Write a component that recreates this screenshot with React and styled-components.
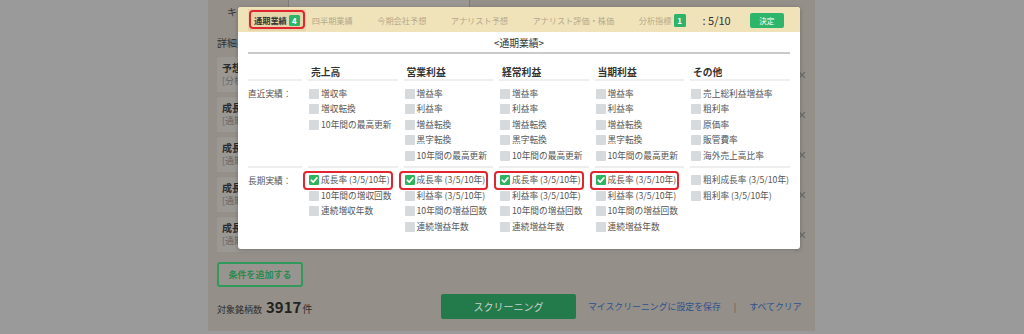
import React from 'react';
import styled, { createGlobalStyle } from 'styled-components';

const GlobalStyle = createGlobalStyle`
  html, body { margin: 0; padding: 0; }
  body {
    font-family: "Noto Sans CJK JP", "Noto Sans", sans-serif;
    background: #9a9a9a;
  }
`;

const Page = styled.div`
  position: relative;
  width: 1024px;
  height: 334px;
  overflow: hidden;
  background: #9a9a9a;
`;

const Main = styled.main`
  margin-left: 208px;
  width: 607px;
  height: 331px;
  box-sizing: border-box;
  padding: 0 6px 0 9px;
  background: #948f88;
  display: flex;
  flex-direction: column;
`;

const KeywordRow = styled.div`
  display: flex;
  align-items: center;
  height: 22px;
  padding-left: 10px;
`;

const KeywordLabel = styled.span`
  width: 61px;
  font-size: 10px;
  color: #333;
`;

const KeywordInput = styled.div`
  width: 182px;
  height: 30px;
  box-sizing: border-box;
  border: 1px solid #7f7b75;
  border-radius: 4px;
  background: #9b9893;
`;

const SectionTitle = styled.div`
  margin-top: 14px;
  font-size: 10px;
  line-height: 14px;
  color: #2e2e2e;
`;

const CardList = styled.div`
  margin-top: 7px;
  display: flex;
  flex-direction: column;
  gap: 5px;
`;

const CardRow = styled.div`
  display: flex;
  align-items: center;
`;

const Card = styled.div`
  flex: 1;
  height: 35px;
  box-sizing: border-box;
  padding: 4px 5px;
  background: #9b9893;
  border-radius: 2px;
`;

const CardTitle = styled.div`
  font-size: 10px;
  line-height: 13px;
  font-weight: 700;
  color: #2b2b2b;
`;

const CardSub = styled.div`
  font-size: 9px;
  line-height: 13px;
  color: #666;
`;

const CloseButton = styled.span`
  width: 14px;
  display: flex;
  justify-content: center;
`;

const AddButton = styled.button`
  margin-top: 10px;
  width: 86px;
  height: 25px;
  box-sizing: border-box;
  border: 2px solid #2f9a5c;
  border-radius: 3px;
  background: #989590;
  color: #2a8a50;
  font-family: inherit;
  font-size: 9px;
  font-weight: 700;
  padding: 0;
`;

const BottomRow = styled.div`
  margin-top: 7px;
  display: flex;
  align-items: center;
  height: 25px;
`;

const Count = styled.div`
  width: 224px;
  display: flex;
  align-items: baseline;
  color: #2e2e2e;
  font-size: 9px;
`;

const CountNum = styled.span`
  font-size: 15px;
  font-weight: 700;
  margin: 0 1px 0 4px;
  color: #222;
`;

const CountUnit = styled.span`
  font-size: 10px;
`;

const ScreenButton = styled.button`
  width: 135px;
  height: 25px;
  border: none;
  border-radius: 2px;
  background: #237a4b;
  color: #c9d3cc;
  font-family: inherit;
  font-size: 10px;
  padding: 0;
`;

const Links = styled.div`
  margin-left: 12px;
  display: flex;
  align-items: center;
  font-size: 8.9px;
  color: #2d5190;
  white-space: nowrap;
`;

const Sep = styled.span`
  margin: 0 13px;
  color: #555;
`;

/* Modal */
const Modal = styled.div`
  position: absolute;
  left: 238px;
  top: 7px;
  width: 562px;
  height: 242px;
  background: #fff;
  border-radius: 3px;
  overflow: hidden;
  box-shadow: 0 1px 4px rgba(0, 0, 0, 0.25);
`;

const ModalHeader = styled.div`
  height: 25px;
  box-sizing: border-box;
  padding: 2px 10px 1px;
  background: #f0e3ba;
  display: flex;
  align-items: center;
  white-space: nowrap;
`;

const Tab = styled.div`
  position: relative;
  flex: none;
  height: 22px;
  box-sizing: border-box;
  padding: 0 6px;
  display: flex;
  align-items: center;
  font-size: 8.2px;
  color: ${p => (p.$active ? '#333' : '#b3a98b')};
  font-weight: ${p => (p.$active ? 700 : 400)};
  background: ${p => (p.$active ? '#e5d7ab' : 'transparent')};
  margin-right: ${p => (p.$active ? '0' : '12.5px')};
  &:last-of-type { margin-right: 0; }
  ${p =>
    p.$active &&
    `
    &::after {
      content: '';
      position: absolute;
      inset: 1px 1px 2px 1px;
      border: 2px solid #e1262f;
      border-radius: 4px;
    }
  `}
`;

const Badge = styled.span`
  display: inline-flex;
  align-items: center;
  justify-content: center;
  width: ${p => p.$w || 11}px;
  height: ${p => p.$h || 11}px;
  margin-left: 2px;
  background: #2db36a;
  color: #fff;
  font-size: 8px;
  font-weight: 700;
  border-radius: 1.5px;
`;

const Score = styled.span`
  flex: none;
  margin-left: 11px;
  font-size: 11px;
  color: #333;
`;

const DecideButton = styled.button`
  flex: none;
  margin-left: 19px;
  width: 34px;
  height: 15px;
  border: none;
  border-radius: 2px;
  background: #2db66b;
  color: #fff;
  font-family: inherit;
  font-size: 7.5px;
  padding: 0;
`;

const ModalBody = styled.div`
  padding: 0 10px;
`;

const ModalTitle = styled.div`
  padding-top: 4px;
  height: 14px;
  line-height: 14px;
  text-align: center;
  font-size: 9.8px;
  color: #333;
`;

const Rule = styled.div`
  margin-top: 2px;
  height: 2px;
  background: #cacaca;
`;

const Grid = styled.div`
  display: grid;
  grid-template-columns: 54px repeat(4, 89.5px) 1fr;
  column-gap: 6px;
`;

const HeadCell = styled.div`
  height: 27px;
  box-sizing: border-box;
  padding: 12px 0 0 3px;
  font-size: 9.8px;
  line-height: 12px;
  font-weight: 700;
  color: #333;
  border-bottom: 2px solid #eeeeee;
`;

const Cell = styled.div`
  padding: 5px 0 ${p => (p.$last ? 0 : 2)}px;
  border-bottom: ${p => (p.$last ? 'none' : '2px solid #eeeeee')};
  display: flex;
  flex-direction: column;
`;

const RowLabel = styled.div`
  font-size: 8.7px;
  line-height: 15.5px;
  color: #555;
  white-space: nowrap;
`;

const Item = styled.label`
  position: relative;
  display: flex;
  align-items: center;
  align-self: flex-start;
  height: 15.5px;
  line-height: 12px;
  font-size: 8.7px;
  color: #555;
  white-space: nowrap;
  ${p =>
    p.$mark &&
    `
    &::after {
      content: '';
      position: absolute;
      inset: -1.5px -3px -1.5px -5px;
      border: 2px solid #e1262f;
      border-radius: 4px;
    }
  `}
`;

const Box = styled.span`
  width: 10px;
  height: 10px;
  margin: 0 2px 0 1px;
  flex: none;
  border-radius: 1px;
  background: ${p => (p.$checked ? '#2fb45f' : '#d6dadd')};
  display: flex;
  align-items: center;
  justify-content: center;
`;

const Check = () => (
  <svg width="8" height="8" viewBox="0 0 8 8">
    <polyline points="1.2,4.2 3.2,6.1 6.9,1.9" fill="none" stroke="#fff" strokeWidth="1.6" strokeLinecap="round" strokeLinejoin="round" />
  </svg>
);

const XIcon = () => (
  <svg width="8" height="8" viewBox="0 0 8 8">
    <path d="M1 1L7 7M7 1L1 7" stroke="#6b6b6b" strokeWidth="1.1" />
  </svg>
);

const columns = [
  {
    head: '売上高',
    recent: ['増収率', '増収転換', '10年間の最高更新'],
    long: [['成長率 (3/5/10年)', true], ['10年間の増収回数'], ['連続増収年数']],
  },
  {
    head: '営業利益',
    recent: ['増益率', '利益率', '増益転換', '黒字転換', '10年間の最高更新'],
    long: [['成長率 (3/5/10年)', true], ['利益率 (3/5/10年)'], ['10年間の増益回数'], ['連続増益年数']],
  },
  {
    head: '経常利益',
    recent: ['増益率', '利益率', '増益転換', '黒字転換', '10年間の最高更新'],
    long: [['成長率 (3/5/10年)', true], ['利益率 (3/5/10年)'], ['10年間の増益回数'], ['連続増益年数']],
  },
  {
    head: '当期利益',
    recent: ['増益率', '利益率', '増益転換', '黒字転換', '10年間の最高更新'],
    long: [['成長率 (3/5/10年)', true], ['利益率 (3/5/10年)'], ['10年間の増益回数'], ['連続増益年数']],
  },
  {
    head: 'その他',
    recent: ['売上総利益増益率', '粗利率', '原価率', '販管費率', '海外売上高比率'],
    long: [['粗利成長率 (3/5/10年)'], ['粗利率 (3/5/10年)']],
  },
];

const cards = [
  ['予想PER', '[分析指標]'],
  ['成長率 (3/5/10年) 売上高', '[通期業績]'],
  ['成長率 (3/5/10年) 営業利益', '[通期業績]'],
  ['成長率 (3/5/10年) 経常利益', '[通期業績]'],
  ['成長率 (3/5/10年) 当期利益', '[通期業績]'],
];

const tabs = ['四半期業績', '今期会社予想', 'アナリスト予想', 'アナリスト評価・株価'];

export default function App() {
  return (
    <Page>
      <GlobalStyle />
      <Main>
        <KeywordRow>
          <KeywordLabel>キーワード</KeywordLabel>
          <KeywordInput />
        </KeywordRow>
        <SectionTitle>詳細条件</SectionTitle>
        <CardList>
          {cards.map(([t, s], i) => (
            <CardRow key={i}>
              <Card>
                <CardTitle>{t}</CardTitle>
                <CardSub>{s}</CardSub>
              </Card>
              <CloseButton>
                <XIcon />
              </CloseButton>
            </CardRow>
          ))}
        </CardList>
        <div>
          <AddButton>条件を追加する</AddButton>
        </div>
        <BottomRow>
          <Count>
            対象銘柄数<CountNum>3917</CountNum>
            <CountUnit>件</CountUnit>
          </Count>
          <ScreenButton>スクリーニング</ScreenButton>
          <Links>
            <span>マイスクリーニングに設定を保存</span>
            <Sep>|</Sep>
            <span>すべてクリア</span>
          </Links>
        </BottomRow>
      </Main>

      <Modal>
        <ModalHeader>
          <Tab $active>
            通期業績<Badge>4</Badge>
          </Tab>
          {tabs.map(t => (
            <Tab key={t}>{t}</Tab>
          ))}
          <Tab>
            分析指標<Badge $w={12} $h={13}>1</Badge>
          </Tab>
          <Score>: 5/10</Score>
          <DecideButton>決定</DecideButton>
        </ModalHeader>
        <ModalBody>
          <ModalTitle>&lt;通期業績&gt;</ModalTitle>
          <Rule />
          <Grid>
            <HeadCell />
            {columns.map(c => (
              <HeadCell key={c.head}>{c.head}</HeadCell>
            ))}
            <Cell>
              <RowLabel>直近実績：</RowLabel>
            </Cell>
            {columns.map(c => (
              <Cell key={c.head}>
                {c.recent.map(r => (
                  <Item key={r}>
                    <Box />
                    {r}
                  </Item>
                ))}
              </Cell>
            ))}
            <Cell $last>
              <RowLabel>長期実績：</RowLabel>
            </Cell>
            {columns.map(c => (
              <Cell $last key={c.head}>
                {c.long.map(([r, checked]) => (
                  <Item key={r} $mark={checked}>
                    <Box $checked={checked}>{checked && <Check />}</Box>
                    {r}
                  </Item>
                ))}
              </Cell>
            ))}
          </Grid>
        </ModalBody>
      </Modal>
    </Page>
  );
}
